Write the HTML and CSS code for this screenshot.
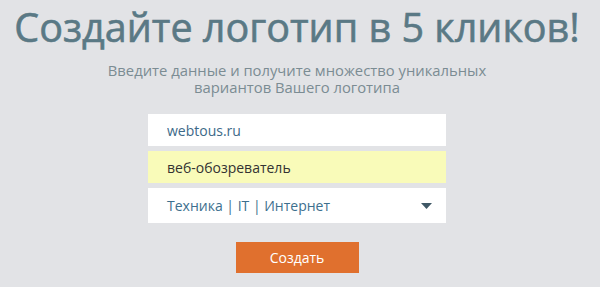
FILE: index.html
```html
<!DOCTYPE html>
<html lang="ru">
<head>
    <meta charset="UTF-8">
    <title>Создайте логотип</title>
    <link rel="stylesheet" href="styles.css">
</head>
<body>
    <div class="hero">
        <h1 class="hero-title">Создайте логотип в 5 кликов!</h1>
        <p class="hero-sub">Введите данные и получите множество уникальных<br>вариантов Вашего логотипа</p>

        <form class="logo-form">
            <input type="text" class="field field-site" value="webtous.ru">
            <input type="text" class="field field-name" value="веб-обозреватель">
            <div class="field field-select">
                <span>Техника | IT | Интернет</span>
                <svg class="select-arrow" width="11" height="6" viewBox="0 0 11 6"><path d="M0 0H11L5.5 6Z" fill="#3f5866"/></svg>
            </div>
            <button type="button" class="create-btn">Создать</button>
        </form>
    </div>
</body>
</html>
```

FILE: styles.css
```css
* {
    box-sizing: border-box;
    margin: 0;
    padding: 0;
}

body {
    background: #e2e3e6;
    font-family: 'Open Sans', 'DejaVu Sans', sans-serif;
}

.hero {
    display: flex;
    flex-direction: column;
    align-items: center;
    padding-right: 6px;
}

.hero-title {
    font-size: 39.5px;
    font-weight: 400;
    color: #5a7985;
    line-height: 54px;
    white-space: nowrap;
    -webkit-text-stroke: 0.6px #5a7985;
}

.hero-sub {
    font-size: 14.8px;
    color: #7b8c93;
    text-align: center;
    line-height: 17px;
    margin-top: 8px;
}

.logo-form {
    width: 298px;
    margin-top: 18px;
    display: flex;
    flex-direction: column;
    gap: 5px;
}

.field {
    width: 100%;
    height: 32px;
    border: none;
    outline: none;
    background: white;
    padding: 0 19px;
    font-family: inherit;
    font-size: 14px;
}

.field-site {
    color: #3d6988;
}

.field-name {
    background: #f9fbb9;
    color: #333;
}

.field-select {
    height: 35px;
    display: flex;
    align-items: center;
    justify-content: space-between;
    color: #3d6f8e;
    padding-right: 14px;
}

.create-btn {
    align-self: center;
    margin-top: 14px;
    width: 123px;
    height: 31px;
    background: #e0702e;
    color: white;
    border: none;
    font-family: inherit;
    font-size: 14px;
}
```
